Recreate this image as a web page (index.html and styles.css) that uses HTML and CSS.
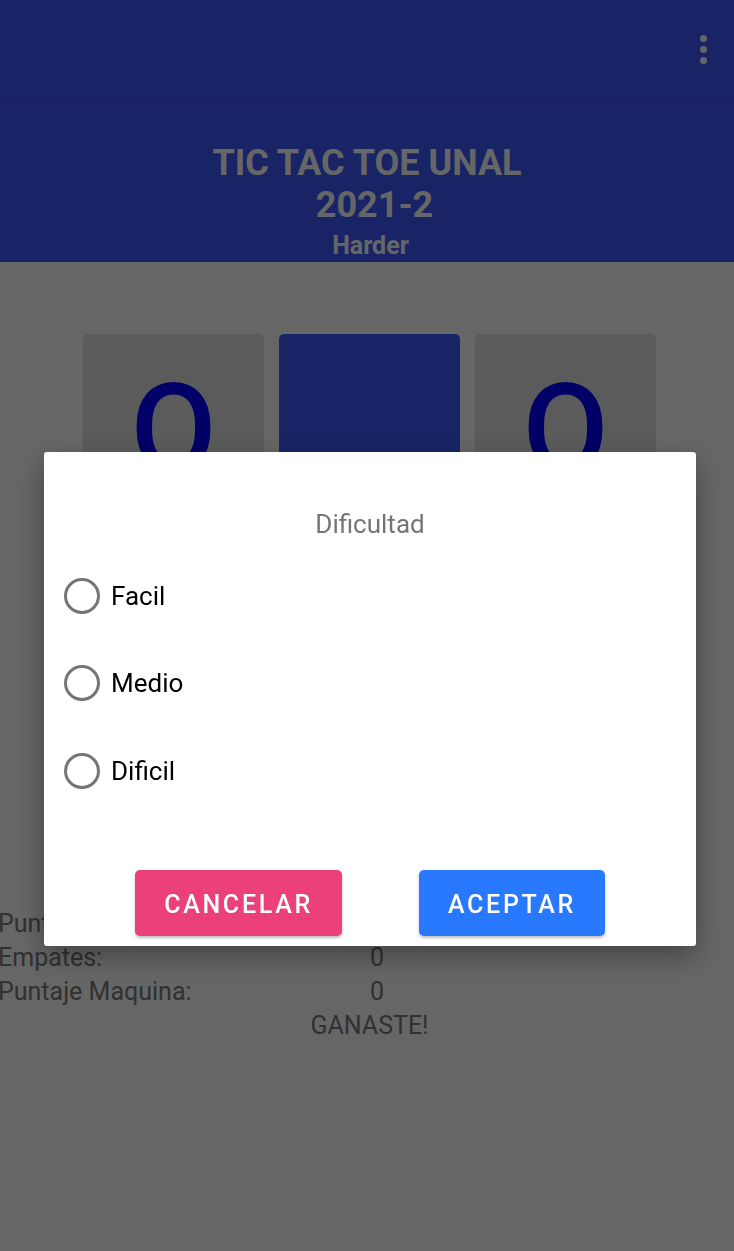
FILE: index.html
```html
<!DOCTYPE html>
<html lang="es">
<head>
<meta charset="utf-8">
<title>Tic Tac Toe UNAL</title>
<link rel="stylesheet" href="styles.css">
</head>
<body>
<div class="app">
  <header class="toolbar">
    <span class="menu"><i></i><i></i><i></i></span>
  </header>
  <section class="title-block">
    <h1>TIC TAC TOE UNAL<br><span class="year">2021-2</span></h1>
    <p class="level">Harder</p>
  </section>
  <main class="content">
    <div class="board">
      <div class="cell">O</div>
      <div class="cell cell-active"></div>
      <div class="cell">O</div>
      <div class="cell"></div>
      <div class="cell"></div>
      <div class="cell"></div>
      <div class="cell"></div>
      <div class="cell"></div>
      <div class="cell"></div>
    </div>
    <div class="scores">
      <span class="label">Puntaje Jugador:</span><span class="value"></span>
      <span class="label">Empates:</span><span class="value">0</span>
      <span class="label">Puntaje Maquina:</span><span class="value">0</span>
      <span class="result">GANASTE!</span>
    </div>
  </main>
</div>
<div class="scrim"></div>
<div class="dialog-layer">
  <div class="dialog">
    <h2 class="dialog-title">Dificultad</h2>
    <ul class="options">
      <li class="option"><span class="radio"></span><span class="option-label">Facil</span></li>
      <li class="option"><span class="radio"></span><span class="option-label">Medio</span></li>
      <li class="option"><span class="radio"></span><span class="option-label">Dificil</span></li>
    </ul>
    <div class="actions">
      <button class="btn btn-cancel">CANCELAR</button>
      <button class="btn btn-ok">ACEPTAR</button>
    </div>
  </div>
</div>
</body>
</html>
```
FILE: styles.css
```css
* { box-sizing: border-box; }
html, body { margin: 0; padding: 0; }
body {
  width: 734px;
  height: 1251px;
  overflow: hidden;
  background: #ffffff;
  font-family: Roboto, "Liberation Sans", sans-serif;
}
.app { width: 734px; }
.toolbar {
  position: relative;
  z-index: 1;
  height: 100px;
  background: #3d5afe;
  box-shadow: 0 1px 1px rgba(0,0,0,0.08);
  display: flex;
  justify-content: flex-end;
  align-items: flex-start;
  padding: 35px 27px 0 0;
}
.menu { display: flex; flex-direction: column; gap: 4px; }
.menu i { display: block; width: 7px; height: 7px; border-radius: 50%; background: #fff; }
.title-block {
  background: #3d5afe;
  color: #fff;
  text-align: center;
  padding: 42px 0 2px;
}
.title-block h1 {
  margin: 0;
  font-size: 36px;
  line-height: 42px;
  font-weight: 700;
}
.year { padding-left: 15px; }
.level {
  margin: 5px 0 0;
  padding-left: 7px;
  font-size: 25px;
  line-height: 29px;
  font-weight: 700;
}
.content { padding-top: 72px; }
.board {
  margin-left: 83px;
  display: grid;
  grid-template-columns: repeat(3, 181px);
  grid-auto-rows: 181px;
  gap: 15px;
}
.cell {
  background: #e3e3e3;
  border-radius: 5px;
  display: flex;
  justify-content: center;
  align-items: center;
  padding-top: 10px;
  font-size: 125px;
  font-weight: 500;
  line-height: 1;
  color: #0000ff;
}
.cell-active { background: #3d5afe; }
.scores {
  display: grid;
  grid-template-columns: 372px 1fr;
  margin-left: -2px;
  font-size: 25px;
  line-height: 34px;
  color: #7a7a7a;
}
.result { grid-column: 1 / -1; text-align: center; padding-left: 7px; }
.scrim {
  position: fixed;
  inset: 0;
  z-index: 2;
  background: rgba(0,0,0,0.6);
}
.dialog-layer {
  position: fixed;
  inset: 0;
  z-index: 3;
  padding: 452px 0 0 44px;
}
.dialog {
  width: 652px;
  background: #fff;
  border-radius: 3px;
  box-shadow: 0 10px 28px rgba(0,0,0,0.35);
  padding: 57px 0 10px;
}
.dialog-title {
  margin: 0;
  text-align: center;
  font-size: 26px;
  line-height: 30px;
  font-weight: 400;
  color: #757575;
}
.options { list-style: none; margin: 13px 0 0; padding: 0 0 0 20px; }
.option {
  height: 87.5px;
  display: flex;
  align-items: center;
}
.radio {
  width: 36px;
  height: 36px;
  border: 3.5px solid #757575;
  border-radius: 50%;
}
.option-label {
  margin-left: 11px;
  font-size: 26px;
  color: #000;
}
.actions {
  margin-top: 55px;
  display: flex;
  justify-content: center;
  gap: 77px;
}
.btn {
  height: 66px;
  border: none;
  border-radius: 5px;
  padding: 4px 20px 0;
  font-family: Roboto, "Liberation Sans", sans-serif;
  font-size: 25px;
  font-weight: 500;
  letter-spacing: 2.7px;
  color: #fff;
  box-shadow: 0 2px 3px rgba(0,0,0,0.25);
}
.btn-cancel { background: #ec407a; width: 207px; }
.btn-ok { background: #2979ff; width: 186px; }
```
